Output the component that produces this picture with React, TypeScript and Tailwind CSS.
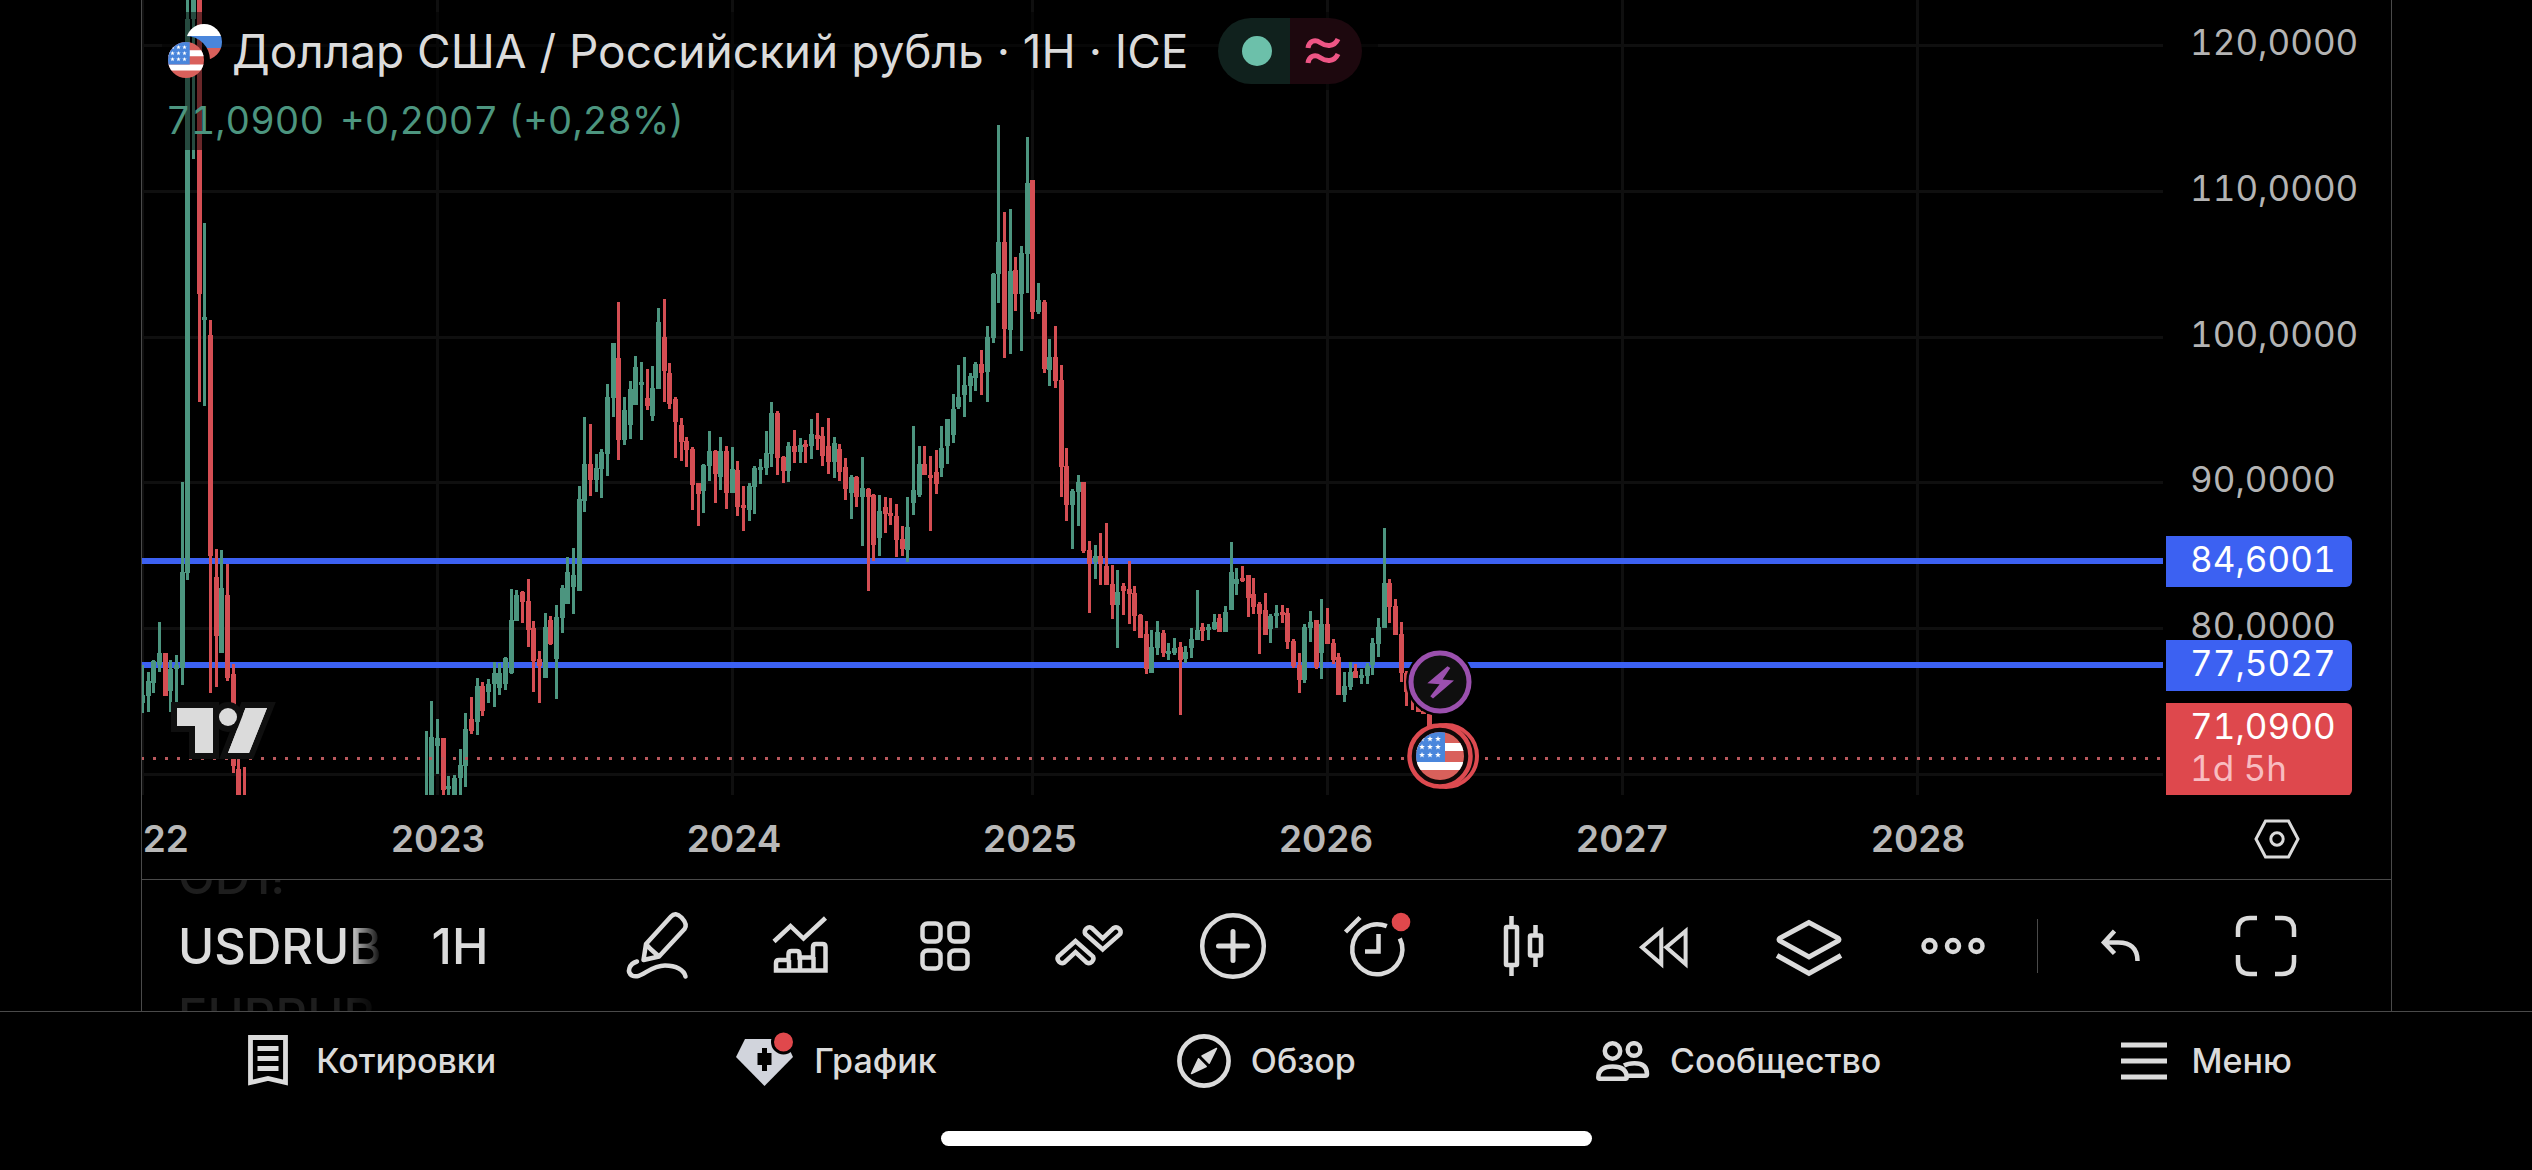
import React from 'react';
import clsx from 'clsx';

// chart geometry
const CHART_HEIGHT = 795;
const BAR_STEP = 5.67;
const TOP_PRICE = 120;
const TOP_PRICE_Y = 45;
const PX_PER_UNIT = 14.58;

const GREEN = '#4c957f';
const RED = '#d44e53';
const BLUE = '#3c61f2';

const priceY = (price: number) => Math.round(TOP_PRICE_Y + (TOP_PRICE - price) * PX_PER_UNIT);
const barX = (index: number) => Math.floor(0.5 + index * BAR_STEP);
const formatPrice = (price: number) => price.toFixed(4).replace('.', ',');

const gridPrices = [120, 110, 100, 90, 80, 70];
const yearBars = [0, 52, 104, 157, 209, 261, 313];
const years = ['2022', '2023', '2024', '2025', '2026', '2027', '2028'];
const levels = [84.6001, 77.5027];
const lastPrice = 71.09;

// weekly bars: high, low, body top, body bottom; a leading "-" marks a falling week
const firstRun = `
665 713 695 703|672 712 681 696|660 693 661 683|622 672 653 665|-653 696 653 696|660 712 669 691|655 702 665 669
482 685 572 668|0 580 19 573|0 159 0 19|-0 402 0 294|223 406 317 320|-320 693 335 556|-549 687 577 636
550 653 588 653|-564 681 595 678|-664 773 674 766|-759 795 769 795|-767 795 795 795`;

const secondRun = `
731 795 795 795|701 795 737 795|719 774 738 746|-738 795 738 790|776 795 786 789|775 795 778 795|749 795 765 778
713 787 729 766|-697 734 719 731|678 735 686 722|-682 716 686 711|679 703 684 692|662 707 673 684|663 695 673 688
657 690 658 684|589 674 620 673|590 621 595 621|-591 623 592 602|-579 647 601 630|-621 692 628 661|-651 703 659 666
613 678 627 678|-616 645 620 644|605 699 617 659|585 633 588 618|557 604 572 604|548 614 575 587|486 591 499 591
417 512 464 501|-424 496 464 480|454 492 468 480|449 498 452 469|384 476 397 454|343 417 343 398|-302 460 358 440
397 445 410 440|381 439 389 425|356 405 367 405|362 440 382 385|-369 410 398 406|366 421 388 416|308 389 322 389
-299 402 337 371|-363 409 373 404|-397 458 399 422|-418 461 425 442|-437 467 441 450|-447 510 449 485|-483 526 483 494
464 513 465 491|431 481 451 466|-450 503 451 474|437 490 451 477|-446 509 451 493|447 493 469 493|-461 516 470 507
-486 531 505 508|483 521 486 510|466 514 468 487|459 484 467 470|431 475 453 468|402 467 413 454|-411 475 413 458
-456 483 457 471|442 482 446 471|-430 463 446 452|438 463 445 452|-440 463 444 447|419 459 434 446|-413 450 435 439
-427 466 436 456|-418 474 446 462|437 478 443 462|-444 481 449 472|-458 500 467 489|475 519 477 493|-476 507 477 497
457 546 488 497|-488 591 489 497|-494 561 495 545|495 556 511 538|-497 533 507 514|-498 525 513 516|-504 557 516 540
-526 556 539 549|497 562 527 550|426 515 490 503|446 497 464 495|-446 475 464 475|-456 531 475 478|-450 494 472 484
426 477 448 468|419 464 419 446|394 443 409 435|365 409 397 407|357 417 385 395|373 402 376 386|362 391 364 378
-350 395 364 373|326 402 337 372|273 343 274 338|125 303 242 274|-212 358 242 329|209 354 271 330|-257 311 270 294
246 351 253 294|137 293 183 254|-180 319 180 312|283 314 300 312|-300 373 302 369|339 386 357 370|-326 388 357 381
-365 497 380 467|-448 521 466 505|489 549 491 505|475 526 482 492|-482 553 482 551|-541 613 550 564|545 579 556 562
-533 585 556 564|-523 585 566 585|-565 619 584 605|570 648 592 605|-583 615 586 591|-561 624 589 594|-586 631 593 616
-614 638 615 638|-621 674 634 669|630 673 647 673|621 655 632 648|-630 657 633 653|643 660 651 654|638 655 648 653
-642 715 647 660|646 663 652 659|628 658 639 648|590 640 630 640|-623 641 627 631|624 640 627 630|614 630 622 629
-614 632 618 632|606 632 612 632|542 610 572 610|568 595 579 584|-566 582 578 581|-575 617 575 598|-578 614 594 607
-602 654 604 614|-593 635 610 635|614 643 616 629|605 628 613 616|-605 623 612 615|-608 649 613 642|-639 668 641 666
-653 693 665 680|624 683 627 680|611 642 622 628|-620 669 620 667|599 679 624 653|-608 644 624 644|-639 664 643 660
-653 695 657 695|672 702 686 695|662 690 672 687|-664 678 671 678|669 684 675 678|663 684 666 676|638 675 643 665
618 657 627 644|528 628 583 628|-579 623 583 607|-599 635 606 635|-622 682 634 673|-671 706 673 692|-690 710 692 692
-705 712 705 712|-706 714 711 714|-714 760 714 760`;

interface Bar {
  x: number;
  high: number;
  low: number;
  top: number;
  bottom: number;
  color: string;
}

function parseBars(run: string, start: number): Bar[] {
  return run
    .trim()
    .split(/[|\n]/)
    .map((item, i) => {
      const [high, low, top, bottom] = item.replace('-', '').split(' ').map(Number);
      return { x: barX(start + i), high, low, top, bottom, color: item.startsWith('-') ? RED : GREEN };
    });
}

const bars = [...parseBars(firstRun, 0), ...parseBars(secondRun, 50)];

const STAR = 'M0-2.9.8-.9 2.9-.9 1.2.5 1.8 2.6 0 1.3-1.8 2.6-1.2.5-2.9-.9-.8-.9Z';

function UsFlag() {
  return (
    <>
      <path fill="#d9605b" d="M0 0h48v48H0z" />
      <path fill="#fff" d="M0 11h48v8H0zM0 30h48v8H0z" />
      <path fill="#4a86dc" d="M0 0h29v30H0z" />
      {[7, 15, 23].map((y) =>
        [6, 14, 22].map((x) => <path key={`${x}-${y}`} transform={`translate(${x} ${y})`} fill="#fff" d={STAR} />)
      )}
    </>
  );
}

function PriceChart() {
  return (
    <svg className="block w-full h-[795px]" role="img" aria-label="USDRUB">
      <defs>
        <clipPath id="flag-round">
          <circle cx="24" cy="24" r="24" />
        </clipPath>
      </defs>

      {gridPrices.map((price) => (
        <rect key={price} x="0" y={priceY(price) - 1} width="100%" height="3" fill="#0f0f0f" />
      ))}
      {yearBars.map((index) => (
        <rect key={index} x={barX(index) - 1} y="0" width="3" height={CHART_HEIGHT} fill="#0f0f0f" />
      ))}
      {levels.map((price) => (
        <rect key={price} x="0" y={priceY(price) - 3} width="100%" height="6" fill={BLUE} />
      ))}

      {bars.map((bar) => (
        <g key={bar.x} fill={bar.color}>
          <rect x={bar.x - 1} y={bar.high} width="3" height={bar.low - bar.high} />
          <rect x={bar.x - 2} y={bar.top} width="5" height={bar.bottom - bar.top} />
        </g>
      ))}

      <line x1="-1" x2="100%" y1="758.5" y2="758.5" stroke="#b9595d" strokeWidth="3" strokeDasharray="3 9" />

      {/* TradingView mark */}
      <g transform="translate(35 708)" fill="#dbdbdb" stroke="#0f0f0f" strokeWidth="12" paintOrder="stroke">
        <path d="M0 0h36v45H18V18H0zM68.500 0H90L72 45H51z" />
        <circle cx="51" cy="9" r="9" />
        <path stroke="none" d="M0 0h36v45H18V18H0zM68.500 0H90L72 45H51z" />
      </g>

      {/* event markers */}
      <g transform="translate(1298 682)">
        <circle r="34" fill="#000" />
        <circle r="29" fill="#0f0f0f" stroke="#9b50ae" strokeWidth="5" />
        <path fill="#9b50ae" d="M7.500-15.800 10.300-14 2.600-2.600 14-1.500-7 16.600-9.700 14.200-.4 2.200-12.700 1.300z" />
      </g>
      <g transform="translate(1298 756)">
        <circle cx="6" r="31" fill="#0f0808" stroke="#dd4a50" strokeWidth="4" />
        <circle r="30.500" fill="#0f0808" stroke="#dd4a50" strokeWidth="4.500" />
        <g transform="translate(-24 -24)" clipPath="url(#flag-round)">
          <UsFlag />
        </g>
      </g>
    </svg>
  );
}

function PairFlags() {
  return (
    <svg className="w-[54px] h-[54px] shrink-0" viewBox="0 0 54 54">
      <defs>
        <mask id="ru-cut">
          <circle cx="36" cy="18" r="18" fill="#fff" />
          <circle cx="18" cy="36" r="24" fill="#000" />
        </mask>
      </defs>
      <g mask="url(#ru-cut)">
        <path fill="#fff" d="M18 0h36v12H18z" />
        <path fill="#4a86dc" d="M18 12h36v12H18z" />
        <path fill="#d9605b" d="M18 24h36v12H18z" />
      </g>
      <g transform="translate(0 18) scale(.75)" clipPath="url(#flag-round)">
        <UsFlag />
      </g>
    </svg>
  );
}

function Legend() {
  return (
    <div className="absolute left-5 top-3 flex flex-col items-start">
      <div className="flex items-center h-[78px] pl-[6px] pr-4 bg-black/50">
        <PairFlags />
        <h1 className="ml-[10px] text-[46px] leading-[78px] text-[#dbdbdb] whitespace-nowrap">
          Доллар США / Российский рубль · 1H · ICE
        </h1>
        <div className="ml-[30px] flex h-[66px] rounded-full overflow-hidden">
          <span className="flex w-[72px] items-center justify-center pl-[6px] bg-[#10211d]">
            <span className="size-[30px] rounded-full bg-[#6cc0aa]" />
          </span>
          <span className="flex w-[72px] items-center justify-center pr-[6px] bg-[#1d080e]">
            <svg className="w-9 h-7" viewBox="0 0 36 28" fill="none" stroke="#ee5585" strokeWidth="5">
              <path d="M3 11C4 4 10 2 15 5.500S29 11 33 2M3 26C4 19 10 17 15 20.500S29 26 33 17" />
            </svg>
          </span>
        </div>
      </div>
      <div className="flex gap-4 h-[60px] pl-1 pr-3 text-[38px] leading-[60px] tabular-nums text-[#4c957f] bg-black/50 whitespace-nowrap">
        <span>{formatPrice(lastPrice)}</span>
        <span>+0,2007 (+0,28%)</span>
      </div>
    </div>
  );
}

interface TagProps {
  top: number;
  className: string;
  children: React.ReactNode;
}

function PriceTag({ top, className, children }: TagProps) {
  return (
    <div
      className={clsx('absolute left-[3px] w-[186px] pt-[2px] pb-[7px] pl-6 rounded-r-md text-white', className)}
      style={{ top }}
    >
      {children}
    </div>
  );
}

function PriceAxis() {
  return (
    <div className="relative w-[228px] h-[795px] shrink-0 overflow-hidden text-[35px] leading-[42px] tabular-nums text-[#b4b4b4]">
      {gridPrices.slice(0, 5).map((price) => (
        <div key={price} className="absolute left-[27px]" style={{ top: priceY(price) - 24 }}>
          {formatPrice(price)}
        </div>
      ))}
      {levels.map((price) => (
        <PriceTag key={price} top={priceY(price) - 25} className="bg-[#3c61f2]">
          {formatPrice(price)}
        </PriceTag>
      ))}
      <PriceTag top={CHART_HEIGHT - 92} className="bg-[#de484d]">
        <div>{formatPrice(lastPrice)}</div>
        <div className="text-[#f8bcc0]">1d 5h</div>
      </PriceTag>
    </div>
  );
}

function TimeAxis() {
  return (
    <div className="flex h-[85px] pt-1 border-b border-[#4a4a4a]">
      <div className="flex flex-1 overflow-hidden items-center text-[37px] leading-[42px] font-semibold text-[#b8b8b8]">
        {years.map((year) => (
          <span key={year} className="w-[296px] shrink-0 text-center first:-ml-[148px]">
            {year}
          </span>
        ))}
      </div>
      <button aria-label="Настройки шкалы" className="flex w-[228px] items-center justify-center">
        <svg className="w-[46px] h-10" viewBox="0 0 46 40" fill="none" stroke="#dbdbdb" strokeWidth="3">
          <path d="M11.500 2h23L44 20l-9.500 18h-23L2 20z" />
          <circle cx="23" cy="20" r="6.200" />
        </svg>
      </button>
    </div>
  );
}

interface ToolProps {
  label: string;
  className?: string;
  children: React.ReactNode;
}

function Tool({ label, className = 'flex-1', children }: ToolProps) {
  return (
    <button aria-label={label} className={clsx('flex items-center justify-center', className)}>
      <svg
        className="size-[72px] overflow-visible"
        viewBox="0 0 72 72"
        fill="none"
        stroke="#dbdbdb"
        strokeWidth="4.500"
      >
        {children}
      </svg>
    </button>
  );
}

function Toolbar() {
  return (
    <div className="flex h-[131px] items-center pr-[53px] text-[#dbdbdb]">
      <div className="w-[204px] h-full pt-[2px] ml-9 shrink-0 flex flex-col justify-center overflow-hidden text-[49px] leading-[70px] font-medium [mask-image:linear-gradient(to_right,black_84%,transparent)]">
        <button className="text-left text-[#1e1e1e]">GD1!</button>
        <button className="text-left">USDRUB</button>
        <button className="text-left text-[#1e1e1e]">EURRUB</button>
      </div>
      <button className="w-[156px] pt-[2px] mr-[47px] text-[49px] leading-[70px] font-medium">1H</button>

      <div className="flex flex-1">
        <Tool label="Рисование">
          <path
            strokeLinejoin="round"
            d="M25 34 50 6.500Q54.500 1.500 60.500 7.500 67 14.500 63.500 19L38 46.500 22.500 50zM25 34l4.500 5L38 46.500"
          />
          <path strokeLinecap="round" d="M16 51.500C8 54 5.500 62 11 65.500 20 70 28 55.500 44 55.500 55 55.500 63 60 64.500 66.500" />
        </Tool>
        <Tool label="Индикаторы">
          <path d="M9 31.500 25.500 16 38.500 28.500 60.500 8" />
          <path d="M11 60.500V53q0-3 3-3h9.500V44q0-3 3-3h5q3 0 3 3v3.500h13.500V37q0-3 3-3h6.500q3 0 3 3v23.500zM24 50v10M35 47v13M48.500 47v13" />
        </Tool>
        <Tool label="Шаблоны">
          <rect x="13.500" y="13.500" width="18" height="18" rx="5" />
          <rect x="40.500" y="13.500" width="18" height="18" rx="5" />
          <rect x="13.500" y="40.500" width="18" height="18" rx="5" />
          <rect x="40.500" y="40.500" width="18" height="18" rx="5" />
        </Tool>
        <Tool label="Торговля">
          <path d="M22.500 31 5 46.500A4.700 4.700 0 0 0 11.500 52.500L22.500 42 33.500 52.500A4.700 4.700 0 0 0 40 46.500z" />
          <path
            transform="rotate(180 36.100 35.200)"
            d="M22.500 31 5 46.500A4.700 4.700 0 0 0 11.500 52.500L22.500 42 33.500 52.500A4.700 4.700 0 0 0 40 46.500z"
          />
        </Tool>
        <Tool label="Добавить">
          <circle cx="36" cy="36" r="30.800" />
          <path strokeLinecap="round" strokeWidth="5" d="M36 21.500v29M21.500 36h29" />
        </Tool>
        <Tool label="Оповещения">
          <path d="M45.800 16.200A25 25 0 1 0 58.800 28.500" />
          <path d="M4.500 22 19 7.500M37.500 24v17.500H24" />
          <circle cx="60" cy="12" r="9.300" fill="#e0484c" stroke="none" />
        </Tool>
        <Tool label="Тип графика">
          <rect x="21" y="17" width="11" height="38" rx="1" />
          <path d="M26.500 6v10M26.500 56v10" />
          <rect x="45" y="25.500" width="11" height="20" rx="1" />
          <path d="M50.500 15v10M50.500 46v11" />
        </Tool>
        <Tool label="Симулятор">
          <path strokeWidth="4" d="M13 37.300 32.300 21v33zM37.300 37.300 56.600 21v33z" />
        </Tool>
        <Tool label="Слои">
          <path
            strokeWidth="5"
            d="M36 12.500 7 28q-2 1.500 0 3L36 47 65 31q2-1.500 0-3zM4 45.500 36 63.500 68 45.500"
          />
        </Tool>
        <Tool label="Ещё">
          <circle cx="12.500" cy="36" r="6" />
          <circle cx="36" cy="36" r="6" />
          <circle cx="59.500" cy="36" r="6" />
        </Tool>
      </div>

      <div className="w-[25px] flex justify-center">
        <div className="w-px h-[54px] bg-[#4a4a4a]" />
      </div>
      <Tool label="Отменить" className="w-36">
        <path d="M28.500 21 18 32.500 28.500 43.500M18 32.500H32Q51.500 32.500 51.500 51" />
      </Tool>
      <Tool label="Во весь экран" className="w-36">
        <path d="M8 27V20Q8 8 20 8h7M45 8h7Q64 8 64 20v7M64 45v7Q64 64 52 64h-7M27 64h-7Q8 64 8 52v-7" />
      </Tool>
    </div>
  );
}

interface NavItemProps {
  label: string;
  active?: boolean;
  children: React.ReactNode;
}

function NavItem({ label, active, children }: NavItemProps) {
  return (
    <a href="#" aria-current={active ? 'page' : undefined} className="flex items-center">
      {children}
      <span className="ml-6">{label}</span>
    </a>
  );
}

function BottomNav() {
  return (
    <nav className="border-t border-[#4a4a4a] text-[#dbdbdb]">
      <div className="flex h-[98px] pl-2 items-center justify-evenly text-[34px] leading-[48px] font-medium">
        <NavItem label="Котировки">
          <svg className="w-10 h-[52px] mr-1" viewBox="0 0 40 52" fill="none" stroke="#dbdbdb" strokeWidth="4.800">
            <path d="M2.500 2.500h35v45L20 43.500 2.500 47.500zM9.500 13.500H30.500M9.500 23.500H30.500M9.500 33.500H30.500" />
          </svg>
        </NavItem>
        <NavItem label="График" active>
          <svg className="w-[58px] h-[60px] -mr-1" viewBox="0 0 58 60">
            <path fill="#d1d4dc" d="M9 8h39.500L57 26 28.500 55 0 26z" />
            <path fill="#000" d="M26 17h5v5h4.500v12H31v6h-5v-6h-4.500V22H26z" />
            <circle cx="47.500" cy="11" r="11" fill="#e0484c" stroke="#000" strokeWidth="3" />
          </svg>
        </NavItem>
        <NavItem label="Обзор">
          <svg className="size-[54px] -mr-1" viewBox="-27 -27 54 54" fill="#dbdbdb">
            <circle r="24.600" fill="none" stroke="#dbdbdb" strokeWidth="4.600" />
            <path
              stroke="#dbdbdb"
              strokeWidth="1.500"
              strokeLinejoin="round"
              d="M12.500-12.500-2-5 5.200 2.200zM-12.500 12.500-5.500-2.200 2.200 5.500z"
            />
          </svg>
        </NavItem>
        <NavItem label="Сообщество">
          <svg className="w-[54px] h-10 -mr-1" viewBox="0 0 54 40" fill="none" stroke="#dbdbdb" strokeWidth="4.500">
            <circle cx="16.500" cy="10" r="7.700" />
            <circle cx="38" cy="8.500" r="6.300" />
            <path d="M2.300 36.500C2.300 29 7 25.500 16.500 25.500S30.700 29 30.700 36.500q0 1.200-1.200 1.200h-26q-1.200 0-1.200-1.200z" />
            <path d="M28 24.500Q32 22.200 38.500 22.200 51 22.200 51 33q0 1.700-1.700 1.700H31" />
          </svg>
        </NavItem>
        <NavItem label="Меню">
          <svg className="w-[46px] h-[38px]" viewBox="0 0 46 38" stroke="#dbdbdb" strokeWidth="5">
            <path d="M0 3h46M0 19h46M0 35h46" />
          </svg>
        </NavItem>
      </div>
      <div className="mx-auto mt-[21px] mb-6 w-[651px] h-[15px] rounded-full bg-white" />
    </nav>
  );
}

export default function App() {
  return (
    <div className="min-h-screen bg-black font-['Inter','Liberation_Sans',sans-serif]">
      <main className="ml-[141px] mr-[140px] border-x border-[#4a4a4a]">
        <div className="flex">
          <div className="relative flex-1 min-w-0">
            <PriceChart />
            <Legend />
          </div>
          <PriceAxis />
        </div>
        <TimeAxis />
        <Toolbar />
      </main>
      <BottomNav />
    </div>
  );
}
